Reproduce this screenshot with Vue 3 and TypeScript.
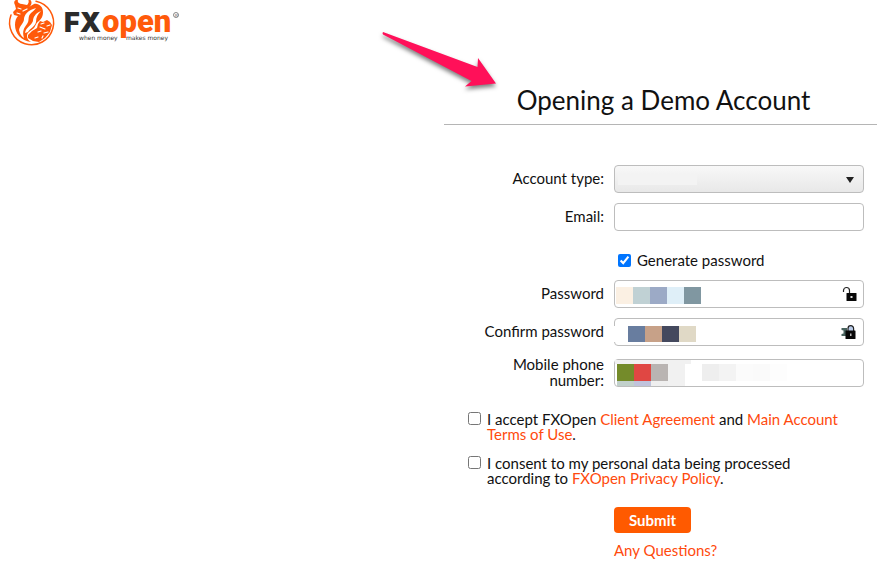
<script setup lang="ts">
import { ref } from 'vue'

interface Block {
  x: number
  y: number
  w: number
  h: number
  fill: string
}

const accountType = ref('')
const email = ref('')
const generate = ref(true)
const password = ref('')
const confirmation = ref('')
const phone = ref('')
const acceptTerms = ref(false)
const acceptPrivacy = ref(false)

const row = (x: number, y: number, h: number, fills: string[]): Block[] =>
  fills.map((fill, i) => ({ x: x + i * 17, y, w: 17, h, fill }))

const typeBlocks: Block[] = [{ x: 4, y: 9, w: 79, h: 11, fill: '#f3f3f3' }]
const passwordBlocks = row(2, 7, 17, ['#fbf0e3', '#c0d1d4', '#9caac6', '#dfeff8', '#8097a1'])
const confirmBlocks: Block[] = [
  { x: 0, y: 8, w: 14, h: 16, fill: '#ffffff' },
  ...row(14, 8, 16, ['#687d9f', '#c7a188', '#44495e', '#e0d9c6']),
]
const phoneBlocks: Block[] = [
  { x: 1, y: 1, w: 76, h: 4, fill: '#f1f1f1' },
  ...row(3, 5, 17, ['#748b2a', '#e04743', '#b9b4b2', '#f1f1f1']),
  ...row(3, 22, 5, ['#c1d0cb', '#c0c3dc', '#efefef', '#f1f1f1']),
  ...row(88, 5, 17, ['#eeeeee', '#f3f3f3', '#fbfbfb', '#fafafa', '#fdfdfd']),
]
</script>

<template>
  <div class="page">
    <header class="brand">
      <svg class="logo" viewBox="0 0 184 48" role="img" aria-label="FXOpen">
        <g fill="none" stroke="#ff5a0a" stroke-linecap="round">
          <path d="M11 15A22 22 0 1 0 36 1.200" stroke-width="1.500" />
        </g>
        <g fill="#ff5a0a">
          <path d="M15 5C13 2 15-1 18 0C17 2 19 4 22 4L27 5C29 3 29 1 28-1C33 0 32 5 29 7L34 4C39 3 43 7 43 12C43 17 41 19 39 21C36 23 36 25 34 28C31 31 27 32 27 36C27 39 29 41 31 42C21 41 15 33 15 25C15 21 16 18 18 16L14 15L13 12L16 9Z" />
          <path d="M38 24L40 21L43 22L47 20L50 22L52 25L50 32L45 38L39 42L33 41L28 38L28 35L32 31L37 28Z" />
        </g>
        <g fill="#fff">
          <path d="M36 8C28 10 24 15 24 19C24 23 20 25 19 30C20 34 21 36 24 38C22 31 24 28 27 24C30 20 27 17 31 13C33 11 35 10 36 8Z" />
          <path d="M41 11C35 13 33 18 33 21C31 26 26 27 25 33L28 32C30 28 35 27 36 22C36 17 38 14 41 11Z" />
        </g>
        <g fill="none" stroke="#fff" stroke-linecap="round" stroke-width="1.200">
          <path d="M18 8L21 9M23 11L27 9M17 13L20 14" />
          <path d="M41 24L44 23M47 26L50 25M38 32L41 31M44 33L48 32M35 38L38 37M42 38L43 36M40 27L45 29" />
        </g>
        <text class="fx" x="64" y="32">FX</text>
        <text class="open" x="102" y="32">open</text>
        <text class="tag" x="79" y="40">when money</text>
        <text class="tag" x="126" y="40">makes money</text>
        <circle cx="176" cy="15" r="2.500" fill="none" stroke="#555" stroke-width=".7" />
        <text class="mark" x="175" y="17">R</text>
      </svg>
    </header>

    <main class="panel">
      <h1>Opening a Demo Account</h1>

      <form @submit.prevent>
        <div class="row">
          <label for="type">Account type:</label>
          <div class="control">
            <select id="type" v-model="accountType">
              <option value=""></option>
            </select>
            <svg class="overlay" viewBox="0 0 250 28" aria-hidden="true">
              <rect v-for="(b, i) in typeBlocks" :key="i" :x="b.x" :y="b.y" :width="b.w" :height="b.h" :fill="b.fill" />
              <path d="M232 12H240L236 18Z" fill="#222" />
            </svg>
          </div>
        </div>

        <div class="row">
          <label for="email">Email:</label>
          <div class="control"><input id="email" v-model="email" type="email" /></div>
        </div>

        <div class="generate">
          <input id="generate" v-model="generate" type="checkbox" />
          <label for="generate">Generate password</label>
        </div>

        <div class="row">
          <label for="password">Password</label>
          <div class="control">
            <input id="password" v-model="password" type="password" />
            <svg class="overlay" viewBox="0 0 250 28" shape-rendering="crispEdges" aria-hidden="true">
              <rect v-for="(b, i) in passwordBlocks" :key="i" :x="b.x" :y="b.y" :width="b.w" :height="b.h" :fill="b.fill" />
              <g shape-rendering="auto">
                <path d="M229.500 12V10.500a3 3 0 0 1 6 0V13" fill="none" stroke="#222" stroke-width="1.200" />
                <rect x="232.500" y="13" width="10" height="8" rx=".5" fill="#080808" />
                <rect x="236.500" y="16" width="2" height="2" fill="#ddd" />
              </g>
            </svg>
          </div>
        </div>

        <div class="row">
          <label for="confirm">Confirm password</label>
          <div class="control">
            <input id="confirm" v-model="confirmation" type="password" />
            <svg class="overlay" viewBox="0 0 250 28" shape-rendering="crispEdges" aria-hidden="true">
              <rect v-for="(b, i) in confirmBlocks" :key="i" :x="b.x" :y="b.y" :width="b.w" :height="b.h" :fill="b.fill" />
              <g shape-rendering="auto">
                <path d="M227.500 10H233V18H227.500V16L229.500 15.500V12.500L227.500 12Z" fill="#48635e" />
                <path d="M234 13V10.500a2.800 2.800 0 0 1 5.600 0V13" fill="#b9cbe8" stroke="#222" stroke-width="1.200" />
                <rect x="231.500" y="12.500" width="10" height="8.500" rx=".5" fill="#080808" />
                <rect x="236" y="15.500" width="1.500" height="2.500" fill="#bbb" />
              </g>
            </svg>
          </div>
        </div>

        <div class="row phone">
          <label for="phone">Mobile phone number:</label>
          <div class="control">
            <input id="phone" v-model="phone" type="tel" />
            <svg class="overlay" viewBox="0 0 250 28" shape-rendering="crispEdges" aria-hidden="true">
              <rect v-for="(b, i) in phoneBlocks" :key="i" :x="b.x" :y="b.y" :width="b.w" :height="b.h" :fill="b.fill" />
            </svg>
          </div>
        </div>

        <div class="consent">
          <input id="terms" v-model="acceptTerms" type="checkbox" />
          <label for="terms">I accept FXOpen <a href="#agreement">Client Agreement</a> and <a href="#terms-of-use">Main Account Terms of Use</a>.</label>
        </div>
        <div class="consent">
          <input id="privacy" v-model="acceptPrivacy" type="checkbox" />
          <label for="privacy">I consent to my personal data being processed according to <a href="#privacy-policy">FXOpen Privacy Policy</a>.</label>
        </div>

        <div class="actions">
          <button type="submit">Submit</button>
          <a href="#questions">Any Questions?</a>
        </div>
      </form>
    </main>

    <svg class="pointer" viewBox="0 0 124 68" aria-hidden="true">
      <path d="M4 3L98.500 38L99 29L117 54.500L86 57.500L92.500 52L4 5.500Q3 4 4 3Z" fill="#ff1059" />
    </svg>
  </div>
</template>

<style>
body {
  margin: 0;
  background: #fff;
}
</style>

<style scoped>
.page {
  position: relative;
  display: grid;
  grid-template-columns: minmax(184px, 1fr) 433px;
  font-family: Lato, "Liberation Sans", sans-serif;
  font-size: 15px;
  line-height: 15px;
  color: #111;
}

.logo {
  display: block;
  width: 184px;
  height: 48px;
}

.fx {
  font-family: Inter, "Liberation Sans", sans-serif;
  font-size: 27px;
  font-weight: 900;
  fill: #2b2b2b;
}

.open {
  font-family: Roboto, "Liberation Sans", sans-serif;
  font-size: 31px;
  font-weight: 900;
  fill: #ff5a0a;
}

.tag {
  font-family: "DejaVu Sans", sans-serif;
  font-size: 6px;
  fill: #333;
}

.mark {
  font-family: "Liberation Sans", sans-serif;
  font-size: 4px;
  fill: #555;
}

h1 {
  margin: 0;
  padding: 84px 0 8px 6px;
  border-bottom: 1px solid #b5b5b5;
  font-size: 26px;
  line-height: 32px;
  font-weight: 400;
  text-align: center;
}

form {
  display: flex;
  flex-direction: column;
  gap: 10px;
  padding: 40px 13px 8px 24px;
}

.row {
  display: grid;
  grid-template-columns: 1fr 250px;
  align-items: center;
  gap: 10px;
}

.row label {
  padding-bottom: 2px;
  text-align: right;
}

.phone label {
  padding-left: 32px;
  line-height: 16px;
}

.control {
  position: relative;
  height: 28px;
}

.control input,
.control select {
  display: block;
  box-sizing: border-box;
  width: 100%;
  height: 28px;
  margin: 0;
  padding: 0 8px;
  border: 1px solid #bdbdbd;
  border-radius: 4px;
  background: #fff;
  font: inherit;
}

.control select {
  appearance: none;
  background: linear-gradient(#f8f8f8, #e8e8e8);
}

.overlay {
  position: absolute;
  inset: 0;
  width: 100%;
  height: 100%;
  pointer-events: none;
}

input[type="checkbox"] {
  flex: none;
  width: 13px;
  height: 13px;
  margin: 0;
}

.generate {
  display: flex;
  align-items: center;
  gap: 6px;
  padding: 12px 0 2px 150px;
}

.consent {
  display: flex;
  gap: 6px;
  padding: 4px 12px 0 0;
}

.phone + .consent {
  padding-top: 12px;
}

a {
  color: #ff4a0d;
  text-decoration: none;
}

.actions {
  display: flex;
  flex-direction: column;
  align-items: flex-start;
  gap: 10px;
  padding: 11px 0 0 146px;
}

button {
  height: 26px;
  padding: 0 15px;
  border: 0;
  border-radius: 4px;
  background: #ff5a00;
  color: #fff;
  font: inherit;
  font-weight: 700;
}

.pointer {
  position: absolute;
  top: 29px;
  left: 379px;
  width: 124px;
  height: 68px;
  filter: drop-shadow(0 3px 2px rgb(0 0 0 / 50%));
}
</style>
